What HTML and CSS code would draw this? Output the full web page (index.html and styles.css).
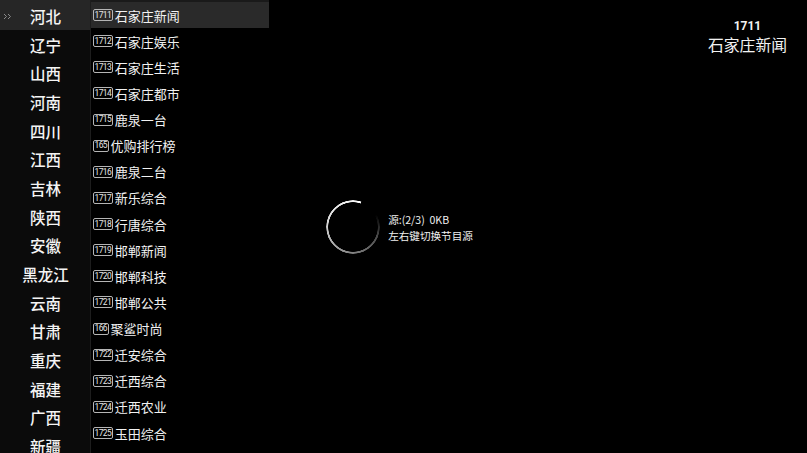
FILE: index.html
```html
<!DOCTYPE html>
<html lang="zh-CN">
<head>
<meta charset="utf-8">
<title>频道列表</title>
<link rel="stylesheet" href="styles.css">
</head>
<body>
<div class="screen">
  <ul class="provinces">
    <li class="prov active"><svg class="marker" width="9" height="7" viewBox="0 0 9 7"><path d="M1 1l2.5 2.5L1 6M5 1l2.5 2.5L5 6" fill="none" stroke="#8a8a8a" stroke-width="1"/></svg>河北</li>
    <li class="prov">辽宁</li>
    <li class="prov">山西</li>
    <li class="prov">河南</li>
    <li class="prov">四川</li>
    <li class="prov">江西</li>
    <li class="prov">吉林</li>
    <li class="prov">陕西</li>
    <li class="prov">安徽</li>
    <li class="prov">黑龙江</li>
    <li class="prov">云南</li>
    <li class="prov">甘肃</li>
    <li class="prov">重庆</li>
    <li class="prov">福建</li>
    <li class="prov">广西</li>
    <li class="prov">新疆</li>
  </ul>
  <ul class="channels">
    <li class="chan active"><span class="num">1711</span><span class="name">石家庄新闻</span></li>
    <li class="chan"><span class="num">1712</span><span class="name">石家庄娱乐</span></li>
    <li class="chan"><span class="num">1713</span><span class="name">石家庄生活</span></li>
    <li class="chan"><span class="num">1714</span><span class="name">石家庄都市</span></li>
    <li class="chan"><span class="num">1715</span><span class="name">鹿泉一台</span></li>
    <li class="chan"><span class="num">165</span><span class="name">优购排行榜</span></li>
    <li class="chan"><span class="num">1716</span><span class="name">鹿泉二台</span></li>
    <li class="chan"><span class="num">1717</span><span class="name">新乐综合</span></li>
    <li class="chan"><span class="num">1718</span><span class="name">行唐综合</span></li>
    <li class="chan"><span class="num">1719</span><span class="name">邯郸新闻</span></li>
    <li class="chan"><span class="num">1720</span><span class="name">邯郸科技</span></li>
    <li class="chan"><span class="num">1721</span><span class="name">邯郸公共</span></li>
    <li class="chan"><span class="num">166</span><span class="name">聚鲨时尚</span></li>
    <li class="chan"><span class="num">1722</span><span class="name">迁安综合</span></li>
    <li class="chan"><span class="num">1723</span><span class="name">迁西综合</span></li>
    <li class="chan"><span class="num">1724</span><span class="name">迁西农业</span></li>
    <li class="chan"><span class="num">1725</span><span class="name">玉田综合</span></li>
  </ul>
  <div class="stage">
    <div class="now">
      <div class="now-num">1711</div>
      <div class="now-name">石家庄新闻</div>
    </div>
  </div>
  <div class="loading">
    <div class="spinner"></div>
    <div class="load-text">
      <div>源:(2/3)&nbsp;&nbsp;0KB</div>
      <div>左右键切换节目源</div>
    </div>
  </div>
</div>
</body>
</html>
```

FILE: styles.css
```css
* { box-sizing: border-box; }
html, body {
  margin: 0;
  padding: 0;
  background: #000;
  width: 807px;
  height: 453px;
  overflow: hidden;
  font-family: "Noto Sans CJK SC", "Noto Sans", sans-serif;
  color: #f2f2f2;
}
ul { list-style: none; margin: 0; padding: 0; }

.screen {
  position: relative;
  display: flex;
  width: 807px;
  height: 453px;
}

.provinces {
  width: 91px;
  flex: none;
  background: #0b0b0b;
  border-right: 1px solid #1d1d1d;
  padding-top: 1.7px;
}
.prov {
  position: relative;
  height: 28.67px;
  display: flex;
  align-items: center;
  justify-content: center;
  font-size: 15.5px;
  font-weight: 500;
  color: #f4f4f4;
  padding-left: 1px;
}
.prov.active {
  background: #262626;
  margin-top: -1.7px;
  height: 30.37px;
  padding-top: 1.7px;
}
.marker {
  position: absolute;
  left: 3px;
  top: 13px;
}

.channels {
  width: 178px;
  flex: none;
  padding-top: 2px;
  position: relative;
  background: #000;
}
.channels::before {
  content: "";
  position: absolute;
  left: 0; right: 0; top: 0;
  height: 2px;
  background: #1a1a1a;
}
.chan {
  height: 26.125px;
  display: flex;
  align-items: center;
  padding-left: 2px;
}
.chan.active { background: #2a2a2a; }
.num {
  display: inline-flex;
  align-items: center;
  justify-content: center;
  height: 12px;
  padding: 0 0.5px;
  border: 1px solid #b5b5b5;
  border-radius: 2px;
  font-family: "Roboto", "Liberation Sans", sans-serif;
  font-size: 8.5px;
  line-height: 1;
  color: #e6e6e6;
  margin-right: 2px;
  letter-spacing: -0.6px;
}
.name {
  font-size: 13px;
  line-height: 1;
  color: #f2f2f2;
}

.stage {
  flex: 1;
  display: flex;
  justify-content: flex-end;
  padding: 18px 20px 0 0;
}
.now {
  text-align: center;
}
.now-num {
  font-family: "Roboto", "Liberation Sans", sans-serif;
  font-weight: 700;
  font-size: 12px;
  line-height: 16px;
  color: #f2f2f2;
}
.now-name {
  font-size: 15.8px;
  line-height: 22px;
  color: #f2f2f2;
}

.loading {
  position: absolute;
  inset: 0;
  display: flex;
  align-items: center;
  justify-content: center;
  gap: 8px;
  padding-right: 8px;
}
.spinner {
  width: 54px;
  height: 54px;
  border-radius: 50%;
  background: conic-gradient(from 62deg,
    rgba(255,255,255,0) 0deg,
    rgba(255,255,255,0.3) 50deg,
    rgba(255,255,255,0.55) 130deg,
    rgba(255,255,255,0.85) 220deg,
    #fff 316deg,
    rgba(255,255,255,0) 317deg);
  -webkit-mask: radial-gradient(circle, transparent 24.5px, #000 25px, #000 26.7px, transparent 27px);
  mask: radial-gradient(circle, transparent 24.5px, #000 25px, #000 26.7px, transparent 27px);
}
.load-text {
  font-size: 10.6px;
  line-height: 16px;
  color: #f0f0f0;
  margin-top: 2px;
}
```
